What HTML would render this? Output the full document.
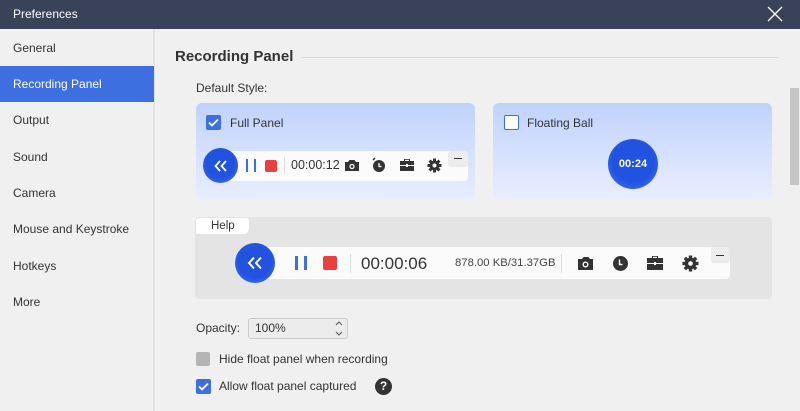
<!DOCTYPE html>
<html><head><meta charset="utf-8"><style>
*{margin:0;padding:0;box-sizing:border-box}
body{width:800px;height:411px;overflow:hidden;background:#f0f0f0;font-family:"Liberation Sans",sans-serif;font-size:12px;color:#333;position:relative}
.a{position:absolute}
.title{left:0;top:0;width:800px;height:29px;background:#3a4259;color:#fff;line-height:29px;padding-left:13px;font-size:12px}
.side{left:0;top:29px;width:155px;height:382px;background:#f0f0f0;border-right:2px solid #e2e2e2}
.it{position:absolute;left:0;width:154px;height:36px;line-height:36px;padding-left:13px;font-size:12px;color:#333}
.sel{background:#3d6fe0;color:#fff}
.card{border-radius:6px;background:linear-gradient(#c0d2fc,#e8eefe)}
.cb{width:15px;height:15px;border-radius:2px;background:#3d6fe0;display:flex;align-items:center;justify-content:center}
.ball{border-radius:50%;background:radial-gradient(circle at 50% 45%,#2152e0 55%,#3f6ff0 85%,#8aa6f5 100%);color:#fff;display:flex;align-items:center;justify-content:center}
.bar{background:#fbfbfb;border-radius:4px}
.min{background:#ececec;border-radius:3px}
.lbl{font-size:12px;color:#333}
</style></head><body>
<div class="a title">Preferences</div>
<svg class="a" style="left:767px;top:6px" width="16" height="16"><path d="M1 1L15 15M15 1L1 15" stroke="#fff" stroke-width="1.3"/></svg>
<div class="a side">
<div class="it" style="top:1px">General</div>
<div class="it sel" style="top:37px">Recording Panel</div>
<div class="it" style="top:73px">Output</div>
<div class="it" style="top:110px">Sound</div>
<div class="it" style="top:146px">Camera</div>
<div class="it" style="top:182px">Mouse and Keystroke</div>
<div class="it" style="top:219px">Hotkeys</div>
<div class="it" style="top:255px">More</div>
</div>
<div class="a" style="left:175px;top:48px;font-weight:bold;font-size:15px;color:#333">Recording Panel</div>
<div class="a" style="left:302px;top:57px;width:476px;height:1px;background:#dcdcdc"></div>
<div class="a lbl" style="left:196px;top:81px">Default Style:</div>

<div class="a card" style="left:196px;top:103px;width:279px;height:96px"></div>
<div class="a cb" style="left:206px;top:115px"><svg width="11" height="9"><path d="M1 4.5L4 7.5L10 1.5" stroke="#fff" stroke-width="1.8" fill="none"/></svg></div>
<div class="a lbl" style="left:230px;top:116px">Full Panel</div>
<div class="a bar" style="left:222px;top:151px;width:246px;height:30px"></div>
<div class="a min" style="left:448px;top:151px;width:20px;height:16px"></div>
<div class="a" style="left:454px;top:158px;width:8px;height:1px;background:#333"></div>
<div class="a ball" style="left:203px;top:148px;width:35px;height:35px"><svg width="14" height="12"><path d="M6 1L1.5 6L6 11M12 1L7.5 6L12 11" stroke="#fff" stroke-width="1.8" fill="none"/></svg></div>
<div class="a" style="left:246px;top:159px;width:2px;height:13px;background:#3d6fe0"></div>
<div class="a" style="left:254px;top:159px;width:2px;height:13px;background:#3d6fe0"></div>
<div class="a" style="left:265px;top:160px;width:12px;height:12px;background:#e84040;border-radius:2px"></div>
<div class="a" style="left:284px;top:157px;width:1px;height:17px;background:#ddd"></div>
<div class="a" style="left:291px;top:158px;font-size:12.5px;color:#333">00:00:12</div>
<svg class="a" style="left:344px;top:158px" width="16" height="14"><path d="M1 4h3l1.5-2h5L12 4h3v9H1z" fill="#333"/><circle cx="8" cy="8.5" r="2.6" fill="#fff"/><circle cx="8" cy="8.5" r="1.4" fill="#333"/></svg>
<svg class="a" style="left:371px;top:157px" width="16" height="16"><circle cx="8" cy="9" r="6" fill="#333"/><path d="M8 6v3.5h2.5" stroke="#fff" stroke-width="1.3" fill="none"/><path d="M2 3l2-2" stroke="#333" stroke-width="1.5"/></svg>
<svg class="a" style="left:399px;top:158px" width="16" height="14"><path d="M5 3V1h6v2h4v10H1V3z" fill="#333"/><rect x="6" y="1.8" width="4" height="1.2" fill="#fff"/><rect x="1" y="7" width="14" height="1" fill="#fff"/><rect x="7" y="6" width="2" height="3" fill="#fff"/></svg>
<svg class="a" style="left:427px;top:158px" width="15" height="15"><g transform="translate(7.5 7.5)" fill="#333"><circle r="5"/><rect x="-1.5" y="-7" width="3" height="14"/><rect x="-1.5" y="-7" width="3" height="14" transform="rotate(45)"/><rect x="-1.5" y="-7" width="3" height="14" transform="rotate(90)"/><rect x="-1.5" y="-7" width="3" height="14" transform="rotate(135)"/><circle r="2" fill="#fff"/></g></svg>

<div class="a card" style="left:493px;top:103px;width:279px;height:96px"></div>
<div class="a" style="left:504px;top:115px;width:15px;height:15px;border:1.5px solid #3d6fe0;background:#fff;border-radius:2px"></div>
<div class="a lbl" style="left:527px;top:116px">Floating Ball</div>
<div class="a ball" style="left:608px;top:139px;width:50px;height:50px;font-size:11px;font-weight:bold">00:24</div>

<div class="a" style="left:195px;top:217px;width:577px;height:82px;background:#e4e4e4;border-radius:4px"></div>
<div class="a" style="left:196px;top:218px;width:53px;height:16px;background:#fff;border-radius:3px 3px 6px 0;font-size:11.5px;line-height:16px;padding-left:15px;color:#333">Help</div>
<div class="a bar" style="left:262px;top:247px;width:468px;height:32px"></div>
<div class="a min" style="left:711px;top:247px;width:19px;height:16px"></div>
<div class="a" style="left:716px;top:255px;width:8px;height:1px;background:#333"></div>
<div class="a ball" style="left:235px;top:243px;width:40px;height:40px"><svg width="16" height="14"><path d="M7 1.5L2 7L7 12.5M14 1.5L9 7L14 12.5" stroke="#fff" stroke-width="2" fill="none"/></svg></div>
<div class="a" style="left:295px;top:256px;width:3px;height:14px;background:#3d6fe0"></div>
<div class="a" style="left:304px;top:256px;width:3px;height:14px;background:#3d6fe0"></div>
<div class="a" style="left:323px;top:256px;width:14px;height:14px;background:#e84040;border-radius:2px"></div>
<div class="a" style="left:350px;top:254px;width:1px;height:19px;background:#ddd"></div>
<div class="a" style="left:361px;top:254px;font-size:17px;color:#333">00:00:06</div>
<div class="a" style="left:455px;top:257px;font-size:11.3px;color:#444">878.00 KB/31.37GB</div>
<div class="a" style="left:561px;top:254px;width:1px;height:19px;background:#ddd"></div>
<svg class="a" style="left:577px;top:255px" width="17" height="16"><path d="M1 4h4l1.5-2h5L13 4h3v11H1z" fill="#333"/><circle cx="8.5" cy="9.5" r="3" fill="#fff"/><circle cx="8.5" cy="9.5" r="1.6" fill="#333"/></svg>
<svg class="a" style="left:612px;top:255px" width="17" height="17"><circle cx="8.5" cy="8.5" r="7.5" fill="#333"/><path d="M7.5 4.5v5h3" stroke="#fff" stroke-width="1.4" fill="none"/></svg>
<svg class="a" style="left:646px;top:255px" width="18" height="16"><path d="M6 3V1h6v2h5v12H1V3z" fill="#333"/><rect x="7" y="1.8" width="4" height="1.2" fill="#fff"/><rect x="1" y="8" width="16" height="1" fill="#fff"/><rect x="8" y="7" width="2" height="3" fill="#fff"/></svg>
<svg class="a" style="left:682px;top:255px" width="17" height="17"><g transform="translate(8.5 8.5)" fill="#333"><circle r="5.8"/><rect x="-1.7" y="-8" width="3.4" height="16"/><rect x="-1.7" y="-8" width="3.4" height="16" transform="rotate(45)"/><rect x="-1.7" y="-8" width="3.4" height="16" transform="rotate(90)"/><rect x="-1.7" y="-8" width="3.4" height="16" transform="rotate(135)"/><circle r="2.3" fill="#fff"/></g></svg>

<div class="a lbl" style="left:196px;top:321px">Opacity:</div>
<div class="a" style="left:248px;top:318px;width:100px;height:21px;border:1px solid #ccc;border-radius:3px;background:#ececec;font-size:12px;line-height:19px;padding-left:6px">100%</div>
<svg class="a" style="left:334px;top:320px" width="10" height="17"><path d="M2 5l3-3 3 3M2 12l3 3 3-3" stroke="#555" stroke-width="1" fill="none"/></svg>
<div class="a" style="left:196px;top:352px;width:14px;height:14px;background:#b5b5b5;border-radius:2px"></div>
<div class="a lbl" style="left:219px;top:352px">Hide float panel when recording</div>
<div class="a cb" style="left:196px;top:379px"><svg width="11" height="9"><path d="M1 4.5L4 7.5L10 1.5" stroke="#fff" stroke-width="1.8" fill="none"/></svg></div>
<div class="a lbl" style="left:219px;top:379px">Allow float panel captured</div>
<div class="a" style="left:375px;top:378px;width:17px;height:17px;border-radius:50%;background:#333;color:#fff;font-weight:bold;font-size:12px;text-align:center;line-height:17px">?</div>

<div class="a" style="left:790px;top:88px;width:9px;height:97px;background:#c4c4c4"></div>
</body></html>
